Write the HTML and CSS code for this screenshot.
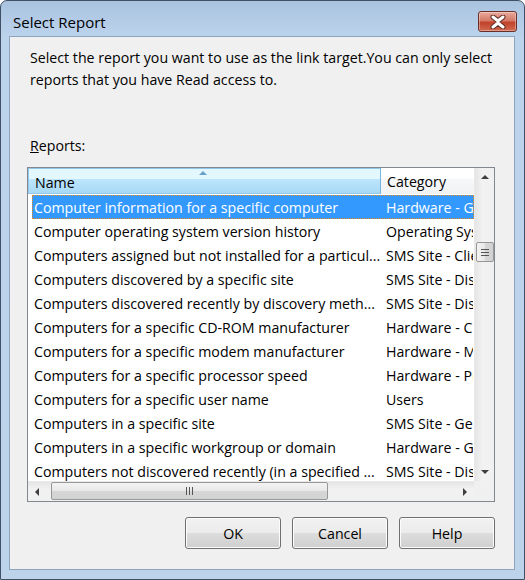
FILE: index.html
```html
<!DOCTYPE html>
<html>
<head>
<meta charset="utf-8">
<link rel="stylesheet" href="styles.css">
</head>
<body>
<div class="window">
  <div class="titlebar">
    <span class="title">Select Report</span>
    <div class="close">
      <svg width="20" height="14" viewBox="0 0 20 14">
        <path d="M5 2 L10 6 L15 2 M5 12 L10 8 L15 12" stroke="#5a2a24" stroke-width="5" fill="none" stroke-linecap="round" stroke-linejoin="round"/>
        <path d="M5 2 L10 6 L15 2 M5 12 L10 8 L15 12" stroke="#ffffff" stroke-width="3" fill="none" stroke-linecap="round" stroke-linejoin="round"/>
      </svg>
    </div>
  </div>
  <div class="client">
    <p class="desc">Select the report you want to use as the link target.You can only select reports that you have Read access to.</p>
    <div class="label"><u>R</u>eports:</div>
    <div class="listbox">
      <div class="view">
        <div class="header">
          <div class="hcol hname">Name<span class="sort"></span></div>
          <div class="hcol hcat">Category</div>
        </div>
        <div class="rows">
          <div class="row selected"><span class="c1">Computer information for a specific computer</span><span class="c2">Hardware - General</span></div>
          <div class="row"><span class="c1">Computer operating system version history</span><span class="c2">Operating System</span></div>
          <div class="row"><span class="c1">Computers assigned but not installed for a particul...</span><span class="c2">SMS Site - Client</span></div>
          <div class="row"><span class="c1">Computers discovered by a specific site</span><span class="c2">SMS Site - Discovery</span></div>
          <div class="row"><span class="c1">Computers discovered recently by discovery meth...</span><span class="c2">SMS Site - Discovery</span></div>
          <div class="row"><span class="c1">Computers for a specific CD-ROM manufacturer</span><span class="c2">Hardware - CD-ROM</span></div>
          <div class="row"><span class="c1">Computers for a specific modem manufacturer</span><span class="c2">Hardware - Modem</span></div>
          <div class="row"><span class="c1">Computers for a specific processor speed</span><span class="c2">Hardware - Processor</span></div>
          <div class="row"><span class="c1">Computers for a specific user name</span><span class="c2">Users</span></div>
          <div class="row"><span class="c1">Computers in a specific site</span><span class="c2">SMS Site - General</span></div>
          <div class="row"><span class="c1">Computers in a specific workgroup or domain</span><span class="c2">Hardware - General</span></div>
          <div class="row"><span class="c1">Computers not discovered recently (in a specified ...</span><span class="c2">SMS Site - Discovery</span></div>
        </div>
      </div>
      <div class="vscroll">
        <div class="arrow up"></div>
        <div class="vtrack"><div class="vthumb"><span class="grip-h"></span></div></div>
        <div class="arrow down"></div>
      </div>
      <div class="hscroll">
        <div class="arrow left"></div>
        <div class="htrack"><div class="hthumb"><span class="grip-v"></span></div></div>
        <div class="arrow right"></div>
      </div>
      <div class="corner"></div>
    </div>
    <div class="buttons">
      <button class="btn">OK</button>
      <button class="btn">Cancel</button>
      <button class="btn">Help</button>
    </div>
  </div>
</div>
</body>
</html>
```
FILE: styles.css
```css
* { box-sizing: border-box; }
html, body { margin: 0; padding: 0; background: #ffffff; }
body { font-family: "Open Sans", "Noto Sans", sans-serif; font-size: 14.2px; color: #000; }

.window {
  width: 525px;
  height: 580px;
  border: 1px solid #3f5066;
  border-radius: 7px 7px 0 0;
  background: linear-gradient(to bottom, #a9c3df 0px, #bcd3ec 36px, #bdd3ea 100%);
  display: flex;
  flex-direction: column;
  padding: 0 9px 9px 8px;
}
.titlebar {
  height: 35px;
  display: flex;
  align-items: flex-start;
  justify-content: space-between;
  padding-left: 4px;
  padding-top: 10px;
}
.title { font-size: 15px; color: #000; line-height: 22px; }
.close {
  width: 39px;
  height: 21px;
  margin-right: -2px;
  border: 1px solid #6b2e27;
  border-radius: 3px;
  background: linear-gradient(to bottom, #e9a99c 0%, #d57a68 45%, #c0432c 55%, #d0694f 100%);
  box-shadow: inset 0 0 0 1px rgba(255,255,255,0.35);
  display: flex;
  align-items: center;
  justify-content: center;
}
.client {
  flex: 1;
  background: #f0f0f0;
  border: 1px solid #8ea3bd;
  padding: 10px 19px 0 17px;
  display: flex;
  flex-direction: column;
}
.desc {
  margin: 0 0 0 3px;
  line-height: 22px;
  width: 470px;
}
.label {
  margin: 45px 0 0 3px;
  line-height: 20px;
  height: 21px;
}
.listbox {
  margin-top: 10px;
  width: 468px;
  height: 335px;
  border: 1px solid #828790;
  background: #fff;
  display: grid;
  grid-template-columns: 446px 20px;
  grid-template-rows: 313px 20px;
}
.view { overflow: hidden; position: relative; }
.header {
  display: flex;
  height: 26px;
  border-bottom: 1px solid #d5d5d5;
}
.hcol {
  height: 26px;
  padding-left: 6px;
  white-space: nowrap;
  padding-top: 2px;
  line-height: 24px;
}
.hname {
  width: 353px;
  position: relative;
  background: linear-gradient(to bottom, #e3f7ff 0%, #e3f7ff 40%, #bde6fd 41%, #a7d9f5 100%);
  border: 1px solid #91c8ec;
  border-right-color: #79b6de;
}
.sort {
  position: absolute;
  left: 170px;
  top: 2px;
  width: 0; height: 0;
  border-left: 4px solid transparent;
  border-right: 4px solid transparent;
  border-bottom: 4px solid #6aa1c8;
}
.hcat {
  flex: 1;
  background: linear-gradient(to bottom, #ffffff 0%, #ffffff 40%, #f7f8fa 41%, #f1f2f4 100%);
  padding-left: 6px;
}
.rows { padding: 1px 0 0 4px; }
.row {
  display: flex;
  height: 24px;
  line-height: 22px;
  padding-top: 1px;
  white-space: nowrap;
  border: 1px solid transparent;
}
.row.selected {
  background: #3399ff;
  color: #fff;
  border: 1px dotted #e08a2c;
}
.c1 {
  width: 347px;
  flex: none;
  padding-left: 1px;
  overflow: hidden;
  padding-right: 0;
}
.c2 { padding-left: 6px; overflow: hidden; flex: 1; }

.vscroll {
  background: linear-gradient(to right, #e5e5e5, #f2f2f2 40%, #f0f0f0);
  display: flex;
  flex-direction: column;
  border-left: 1px solid #e9e9e9;
}
.arrow { width: 20px; height: 20px; flex: none; position: relative; }
.arrow::after { content: ""; position: absolute; width: 0; height: 0; }
.up::after { left: 6px; top: 7px; border-left: 4px solid transparent; border-right: 4px solid transparent; border-bottom: 4px solid #3f3f3f; }
.down::after { left: 6px; top: 9px; border-left: 4px solid transparent; border-right: 4px solid transparent; border-top: 4px solid #3f3f3f; }
.left::after { left: 7px; top: 6px; border-top: 4px solid transparent; border-bottom: 4px solid transparent; border-right: 4px solid #3f3f3f; }
.right::after { left: 9px; top: 6px; border-top: 4px solid transparent; border-bottom: 4px solid transparent; border-left: 4px solid #3f3f3f; }
.vtrack { flex: 1; padding: 54px 0 0 1px; }
.vthumb {
  width: 18px;
  height: 20px;
  border: 1px solid #979797;
  border-radius: 2px;
  background: linear-gradient(to right, #f3f3f3, #e8e8e8 50%, #d6d6d6 51%, #d2d2d2);
  display: flex;
  align-items: center;
  justify-content: center;
}
.grip-h {
  width: 8px; height: 7px;
  border-top: 1px solid #555; border-bottom: 1px solid #555;
  background: linear-gradient(#555, #555) center/8px 1px no-repeat;
}
.hscroll {
  background: linear-gradient(to bottom, #e5e5e5, #f2f2f2 40%, #f0f0f0);
  display: flex;
  border-top: 1px solid #e9e9e9;
}
.htrack { flex: 1; padding: 0 0 0 3px; }
.hthumb {
  width: 277px;
  height: 18px;
  border: 1px solid #979797;
  border-radius: 2px;
  background: linear-gradient(to bottom, #f3f3f3, #e8e8e8 50%, #d6d6d6 51%, #d2d2d2);
  display: flex;
  align-items: center;
  justify-content: center;
}
.grip-v {
  width: 7px; height: 8px;
  border-left: 1px solid #555; border-right: 1px solid #555;
  background: linear-gradient(#555, #555) center/1px 8px no-repeat;
}
.corner { background: #f0f0f0; }

.buttons {
  display: flex;
  justify-content: flex-end;
  gap: 11px;
  margin-top: 15px;
  width: 468px;
}
.btn {
  width: 96px;
  height: 32px;
  font-family: "Open Sans", "Noto Sans", sans-serif;
  font-size: 14.2px;
  color: #000;
  border: 1px solid #707070;
  border-radius: 3px;
  background: linear-gradient(to bottom, #f2f2f2 0%, #ebebeb 50%, #dddddd 51%, #cfcfcf 100%);
  box-shadow: inset 0 0 0 1px #fcfcfc;
  padding: 0;
}
```
